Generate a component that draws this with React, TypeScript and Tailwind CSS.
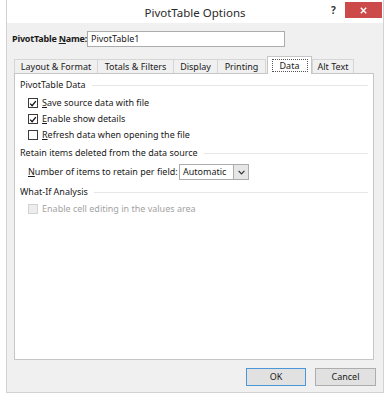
import React from 'react';

const font = { fontFamily: '"Noto Sans", "Open Sans", Arial, sans-serif' };

function Check({ checked, disabled, label }: { checked?: boolean; disabled?: boolean; label: string }) {
  return (
    <div className={`flex items-center h-[16px] pl-[8px] ${disabled ? 'text-[#a3a3a3]' : 'text-[#1a1a1a]'}`}>
      <div
        className={`w-[10px] h-[10px] border flex items-center justify-center mr-[4px] ${
          disabled ? 'border-[#d2d2d2] bg-[#ededed]' : 'border-[#3a3a3a] bg-white'
        }`}
      >
        {checked && (
          <svg width="9" height="9" viewBox="0 0 9 9">
            <path d="M1.3 4.6 L3.5 6.9 L7.7 1.8" stroke="#111" strokeWidth="1.5" fill="none" />
          </svg>
        )}
      </div>
      <span>
        <span className={disabled ? '' : 'underline'}>{label[0]}</span>
        {label.slice(1)}
      </span>
    </div>
  );
}

function Section({ title }: { title: string }) {
  return (
    <div className="flex items-center h-[16px] text-[#1a1a1a]">
      <span className="mr-[6px]">{title}</span>
      <div className="flex-1 h-px bg-[#e6e6e6]" />
    </div>
  );
}

const tabs = [
  { t: 'Layout & Format', w: 84 },
  { t: 'Totals & Filters', w: 77 },
  { t: 'Display', w: 45 },
  { t: 'Printing', w: 49 },
  { t: 'Data', w: 45, sel: true },
  { t: 'Alt Text', w: 42 },
];

export default function App() {
  return (
    <div className="w-[388px] h-[400px] bg-white relative overflow-hidden text-[9px]" style={font}>
      <div className="absolute left-[6px] top-0 w-[378px] h-[393px] border-x border-b border-[#d2d2d2] bg-white flex flex-col">
        {/* title bar */}
        <div className="h-[23px] flex items-center relative">
          <div className="flex-1 text-center text-[11.5px] text-[#2a2a2a] pt-[2px]">PivotTable Options</div>
          <div className="absolute left-[324px] top-[3px] text-[10px] font-bold text-[#333]">?</div>
          <div className="absolute left-[338px] top-[2px] w-[37px] h-[16px] bg-[#cd4a4a] flex items-center justify-center">
            <svg width="7" height="7" viewBox="0 0 7 7">
              <path d="M0.8 0.8 L6.2 6.2 M6.2 0.8 L0.8 6.2" stroke="#fff" strokeWidth="1.4" />
            </svg>
          </div>
        </div>
        {/* body */}
        <div className="flex-1 bg-[#f0f0f0] flex flex-col">
          <div className="flex items-center mt-[8px] h-[16px] pl-[5px]">
            <span className="font-bold text-[#1a1a1a] w-[75px] whitespace-nowrap tracking-[-0.2px]">
              PivotTable <span className="underline">N</span>ame:
            </span>
            <div className="w-[198px] h-[16px] bg-white border border-[#acacac] flex items-center px-[3px] text-[#1a1a1a]">
              PivotTable1
            </div>
          </div>
          {/* tabs */}
          <div className="flex items-end mt-[9px] h-[17px] ml-[7px] relative z-10">
            {tabs.map((x) =>
              x.sel ? (
                <div
                  key={x.t}
                  style={{ width: x.w }}
                  className="h-[18px] mb-[-1px] ml-[1px] mr-[1px] bg-white border border-b-0 border-[#c6c6c6] flex items-center justify-center text-[#1a1a1a]"
                >
                  <span className="w-[36px] text-center border border-dotted border-[#555] leading-[11px]">{x.t}</span>
                </div>
              ) : (
                <div
                  key={x.t}
                  style={{ width: x.w }}
                  className="h-[14px] bg-[#f0f0f0] border border-b-0 border-[#d6d6d6] flex items-center justify-center text-[#1a1a1a] -ml-px first:ml-0"
                >
                  {x.t}
                </div>
              )
            )}
          </div>
          <div className="h-[287px] bg-white border border-[#c6c6c6] ml-[7px] mr-[9px] flex flex-col pt-[3px] pl-[5px] pr-[5px]">
            <Section title="PivotTable Data" />
            <div className="mt-[2px] flex flex-col">
              <Check checked label="Save source data with file" />
              <Check checked label="Enable show details" />
              <Check label="Refresh data when opening the file" />
            </div>
            <div className="mt-[2px]">
              <Section title="Retain items deleted from the data source" />
            </div>
            <div className="flex items-center pl-[8px] mt-[3px] h-[16px] text-[#1a1a1a]">
              <span className="w-[151px]">
                <span className="underline">N</span>umber of items to retain per field:
              </span>
              <div className="w-[70px] h-[16px] border border-[#acacac] bg-white flex items-center">
                <span className="flex-1 pl-[3px]">Automatic</span>
                <div className="w-[15px] h-full bg-[#e6e6e6] border-l border-[#acacac] flex items-center justify-center">
                  <svg width="7" height="5" viewBox="0 0 7 5">
                    <path d="M0.6 0.8 L3.5 3.8 L6.4 0.8" stroke="#333" strokeWidth="1.2" fill="none" />
                  </svg>
                </div>
              </div>
            </div>
            <div className="mt-[4px]">
              <Section title="What-If Analysis" />
            </div>
            <div className="mt-[1px] flex flex-col">
              <Check disabled label="Enable cell editing in the values area" />
            </div>
          </div>
          {/* buttons */}
          <div className="flex mt-[8px] pl-[239px] gap-[9px]">
            <button className="w-[60px] h-[18px] bg-[#e1e1e1] border border-[#4a98da] text-[#1a1a1a] text-[9px]">
              OK
            </button>
            <button className="w-[61px] h-[18px] bg-[#e1e1e1] border border-[#adadad] text-[#1a1a1a] text-[9px]">
              Cancel
            </button>
          </div>
        </div>
      </div>
    </div>
  );
}
